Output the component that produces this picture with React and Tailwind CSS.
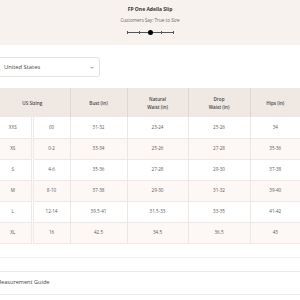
import React from "react";

// ─── Size data ──────────────────────────
const rows = [
  { size: "XXS", us: "00", bust: "31-32", natural: "23-24", drop: "25-26", hips: "34" },
  { size: "XS", us: "0-2", bust: "33-34", natural: "25-26", drop: "27-28", hips: "35-36" },
  { size: "S", us: "4-6", bust: "35-36", natural: "27-28", drop: "29-30", hips: "37-38" },
  { size: "M", us: "8-10", bust: "37-38", natural: "29-30", drop: "31-32", hips: "39-40" },
  { size: "L", us: "12-14", bust: "39.5-41", natural: "31.5-33", drop: "33-35", hips: "41-42" },
  { size: "XL", us: "16", bust: "42.5", natural: "34.5", drop: "36.5", hips: "43" },
];

const FitSlider = () => (
  <div className="relative w-[46px] h-[5px] mt-[7px]">
    <div className="absolute left-0 right-0 top-[2px] h-[0.6px] bg-[#555]" />
    {[0, 12, 34, 46].map((x) => (
      <div
        key={x}
        className="absolute top-[1px] h-[3px] w-[0.6px] bg-[#555]"
        style={{ left: x }}
      />
    ))}
    <div className="absolute left-[20.5px] top-0 w-[5px] h-[5px] rounded-full bg-black" />
  </div>
);

const App = () => {
  return (
    <div
      className="w-[300px] h-[300px] overflow-hidden bg-white text-[#5a5a5a]"
      style={{ fontFamily: '"Open Sans", "Liberation Sans", sans-serif' }}
    >
      {/* Product header */}
      <div className="h-[45px] bg-[#f8f2ee] flex flex-col items-center pt-[6px]">
        <p className="text-[5px] font-bold text-[#333] leading-[6px]">FP One Adella Slip</p>
        <p className="text-[4.6px] text-[#666] leading-[6px] mt-[5px]">Customers Say: True to Size</p>
        <FitSlider />
      </div>

      <div className="-ml-[5px] w-[305px]">
        {/* Region select */}
        <div className="mt-[12px] w-[105px] h-[20px] border border-[#e6e1dd] rounded-[3px] flex items-center justify-between pl-[8px] pr-[5px]">
          <span className="text-[5.8px] text-[#444]">United States</span>
          <svg width="4" height="3" viewBox="0 0 10 6" fill="none">
            <path d="M1 1l4 4 4-4" stroke="#555" strokeWidth="1.6" />
          </svg>
        </div>

        {/* Size table */}
        <table className="mt-[11px] border-collapse table-fixed w-[305px] text-[4.6px]">
          <colgroup>
            <col className="w-[37px]" />
            <col className="w-[38px]" />
            <col className="w-[57px]" />
            <col className="w-[61px]" />
            <col className="w-[62px]" />
            <col className="w-[50px]" />
          </colgroup>
          <thead>
            <tr className="h-[29px] bg-[#efe8e3] text-[#444] leading-[8px]">
              <th colSpan={2} className="border-r border-[#ded7d2] font-semibold">US Sizing</th>
              <th className="border-r border-[#ded7d2] font-semibold">Bust (in)</th>
              <th className="border-r border-[#ded7d2] font-semibold">Natural<br />Waist (in)</th>
              <th className="border-r border-[#ded7d2] font-semibold">Drop<br />Waist (in)</th>
              <th className="font-semibold">Hips (in)</th>
            </tr>
          </thead>
          <tbody>
            {rows.map((r, i) => (
              <tr
                key={r.size}
                className={`h-[21px] text-center border-b border-[#efe9e5] ${
                  i % 2 === 1 ? "bg-[#fdf7f5]" : "bg-white"
                }`}
              >
                <td className="border-r-[3px] border-double border-r-[#efeae7]">{r.size}</td>
                <td className="border-r border-[#ece7e3]">{r.us}</td>
                <td className="border-r border-[#ece7e3]">{r.bust}</td>
                <td className="border-r border-[#ece7e3]">{r.natural}</td>
                <td className="border-r border-[#ece7e3]">{r.drop}</td>
                <td>{r.hips}</td>
              </tr>
            ))}
          </tbody>
        </table>

        {/* Footer links */}
        <div className="mt-[13px] h-[1px] bg-[#f5f2f0]" />
        <div className="mt-[13px] border-t border-[#eeeae7] border-b h-[24px] flex items-center">
          <span className="text-[5.6px] text-[#444] ml-[1px]">Measurement Guide</span>
        </div>
      </div>
    </div>
  );
};

export default App;
